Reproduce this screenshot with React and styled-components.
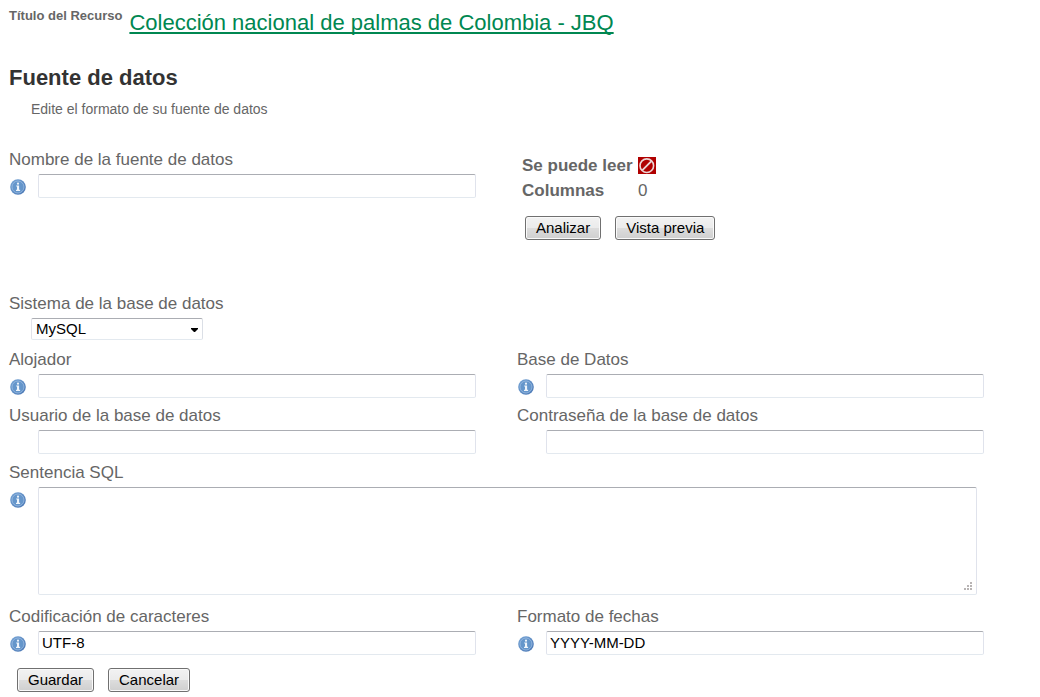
import React from "react";
import styled, { createGlobalStyle } from "styled-components";

const GlobalStyle = createGlobalStyle`
  * { box-sizing: border-box; }
  body {
    margin: 0;
    background: #fff;
    color: #666;
    font: 17px/20px "Liberation Sans", Arial, sans-serif;
  }
`;

const Page = styled.main`
  padding: 8px 15px 4px 9px;
`;

const ResourceTitle = styled.header`
  display: flex;
  align-items: flex-start;
  gap: 7px;
  height: 56px;
`;

const ResourceCaption = styled.span`
  font-size: 13px;
  line-height: 16px;
  font-weight: bold;
`;

const ResourceLink = styled.a`
  color: #008751;
  font-size: 22px;
  line-height: 30px;
  text-decoration: underline;
  text-decoration-thickness: 2px;
  text-underline-offset: 2px;
  text-decoration-skip-ink: none;
`;

const Heading = styled.h1`
  margin: 0;
  color: #333;
  font-size: 22px;
  line-height: 28px;
`;

const Intro = styled.p`
  margin: 8px 0 0 22px;
  font-size: 14px;
  line-height: 18px;
`;

const SourceSection = styled.section`
  display: grid;
  grid-template-columns: 1fr 1fr;
  margin-top: 32px;
  min-height: 144px;
`;

const Row = styled.div`
  display: grid;
  grid-template-columns: ${({ $single }) => ($single ? "1fr" : "1fr 1fr")};
  margin-bottom: 8px;
`;

const FieldBox = styled.div`
  padding: ${({ $wide }) => ($wide ? "1px 48px 4px 0" : "0 41px 0 0")};
`;

const Label = styled.label`
  display: block;
  margin-bottom: 4px;
`;

const Control = styled.div`
  display: grid;
  grid-template-columns: 29px 1fr;
`;

const InfoButton = styled.button`
  width: 16px;
  height: 16px;
  margin: 5px 0 0 1px;
  padding: 0;
  border: 0;
  background: none;
  svg { display: block; }
`;

const edges = `
  border: 1px solid #e0e3ec;
  border-top-color: #abadb3;
  border-bottom-color: #e3e9ef;
  border-radius: 2px;
  background: #fff;
  color: #000;
  font: 15px/18px "Liberation Sans", Arial, sans-serif;
`;

const TextInput = styled.input`
  ${edges}
  grid-column: 2;
  width: 100%;
  height: 24px;
  padding: 0 3px 2px;
`;

const AreaWrap = styled.div`
  position: relative;
  grid-column: 2;
`;

const TextArea = styled.textarea`
  ${edges}
  display: block;
  width: 100%;
  height: 108px;
  padding: 2px;
  resize: none;
`;

const Grip = styled.svg`
  position: absolute;
  right: 5px;
  bottom: 5px;
  pointer-events: none;
`;

const SelectWrap = styled.div`
  position: relative;
  width: 172px;
  height: 24px;
  margin-left: 22px;
`;

const Select = styled.select`
  ${edges}
  display: block;
  width: 100%;
  height: 22px;
  padding: 0 20px 0 4px;
  border-color: #abadb3 #dbdfe6 #e3e9ef #e2e3ea;
  appearance: none;
`;

const Arrow = styled.svg`
  position: absolute;
  right: 5px;
  top: 10px;
  pointer-events: none;
`;

const Status = styled.div`
  padding: 3px 0 0 5px;
`;

const StatusList = styled.dl`
  display: grid;
  grid-template-columns: 116px 1fr;
  grid-auto-rows: 25px;
  align-items: center;
  margin: 0 0 13px;
  dt { font-weight: bold; }
  dd { margin: 0; }
  svg { display: block; }
`;

const Buttons = styled.div`
  display: flex;
  gap: 14px;
  padding-left: ${({ $indent }) => $indent}px;
`;

const Actions = styled.footer`
  padding-top: 5px;
`;

const Button = styled.button`
  height: 24px;
  padding: 0 10px;
  border: 1px solid #707070;
  border-radius: 3px;
  background: linear-gradient(#f2f2f2, #ebebeb 50%, #dddddd 50%, #cfcfcf);
  box-shadow: inset 0 0 0 1px #fafafa;
  color: #000;
  font: 15px/18px "Liberation Sans", Arial, sans-serif;
`;

function Info({ label }) {
  return (
    <InfoButton type="button" aria-label={`Ayuda: ${label}`}>
      <svg width="16" height="16" viewBox="0 0 16 16">
        <defs>
          <linearGradient id="infoBlue" x1="0" y1="0" x2="1" y2="1">
            <stop offset="0" stopColor="#76a5d6" />
            <stop offset="1" stopColor="#4774b2" />
          </linearGradient>
        </defs>
        <circle cx="8" cy="8" r="7.8" fill="url(#infoBlue)" />
        <circle cx="8" cy="8" r="6" fill="#6596cb" stroke="#9dbde2" strokeWidth="0.8" />
        <path d="M6.2 6.4h2.9v4.3h1v1.2H6v-1.2h1V7.6h-.8z" fill="#eef4fb" />
        <circle cx="8" cy="4.7" r="1.1" fill="#eef4fb" />
      </svg>
    </InfoButton>
  );
}

function Field({ id, label, info, type = "text", value = "" }) {
  return (
    <FieldBox>
      <Label htmlFor={id}>{label}</Label>
      <Control>
        {info && <Info label={label} />}
        <TextInput id={id} type={type} defaultValue={value} />
      </Control>
    </FieldBox>
  );
}

export default function App() {
  return (
    <>
      <GlobalStyle />
      <Page>
        <ResourceTitle>
          <ResourceCaption>Título del Recurso</ResourceCaption>
          <ResourceLink href="#recurso">Colección nacional de palmas de Colombia - JBQ</ResourceLink>
        </ResourceTitle>
        <Heading>Fuente de datos</Heading>
        <Intro>Edite el formato de su fuente de datos</Intro>
        <form onSubmit={(e) => e.preventDefault()}>
          <SourceSection>
            <Field id="nombre" label="Nombre de la fuente de datos" info />
            <Status>
              <StatusList>
                <dt>Se puede leer</dt>
                <dd>
                  <svg width="18" height="17" viewBox="0 0 18 17" role="img" aria-label="No">
                    <rect width="18" height="17" fill="#b00000" />
                    <circle cx="8.8" cy="8.7" r="6.8" fill="none" stroke="#ecd6d6" strokeWidth="1.6" />
                    <path d="M4.2 13.3 13.4 4.1" stroke="#ecd6d6" strokeWidth="1.8" />
                  </svg>
                </dd>
                <dt>Columnas</dt>
                <dd>0</dd>
              </StatusList>
              <Buttons $indent={3}>
                <Button type="button">Analizar</Button>
                <Button type="button">Vista previa</Button>
              </Buttons>
            </Status>
          </SourceSection>
          <Row $single>
            <FieldBox>
              <Label htmlFor="sistema">Sistema de la base de datos</Label>
              <SelectWrap>
                <Select id="sistema" defaultValue="MySQL">
                  <option>MySQL</option>
                </Select>
                <Arrow width="7" height="4" viewBox="0 0 7 4" aria-hidden="true">
                  <path d="M0 0h7v1L4 4H3L0 1z" fill="#000" />
                </Arrow>
              </SelectWrap>
            </FieldBox>
          </Row>
          <Row>
            <Field id="alojador" label="Alojador" info />
            <Field id="base" label="Base de Datos" info />
          </Row>
          <Row>
            <Field id="usuario" label="Usuario de la base de datos" />
            <Field id="clave" type="password" label="Contraseña de la base de datos" />
          </Row>
          <Row $single>
            <FieldBox $wide>
              <Label htmlFor="sql">Sentencia SQL</Label>
              <Control>
                <Info label="Sentencia SQL" />
                <AreaWrap>
                  <TextArea id="sql" />
                  <Grip width="8" height="8" viewBox="0 0 8 8" aria-hidden="true">
                    <path d="M6 0h2v2H6zM3 3h2v2H3zM6 3h2v2H6zM0 6h2v2H0zM3 6h2v2H3zM6 6h2v2H6z" fill="#b8b4b4" />
                  </Grip>
                </AreaWrap>
              </Control>
            </FieldBox>
          </Row>
          <Row>
            <Field id="codificacion" label="Codificación de caracteres" info value="UTF-8" />
            <Field id="fechas" label="Formato de fechas" info value="YYYY-MM-DD" />
          </Row>
          <Actions>
            <Buttons $indent={8}>
              <Button type="submit">Guardar</Button>
              <Button type="button">Cancelar</Button>
            </Buttons>
          </Actions>
        </form>
      </Page>
    </>
  );
}
